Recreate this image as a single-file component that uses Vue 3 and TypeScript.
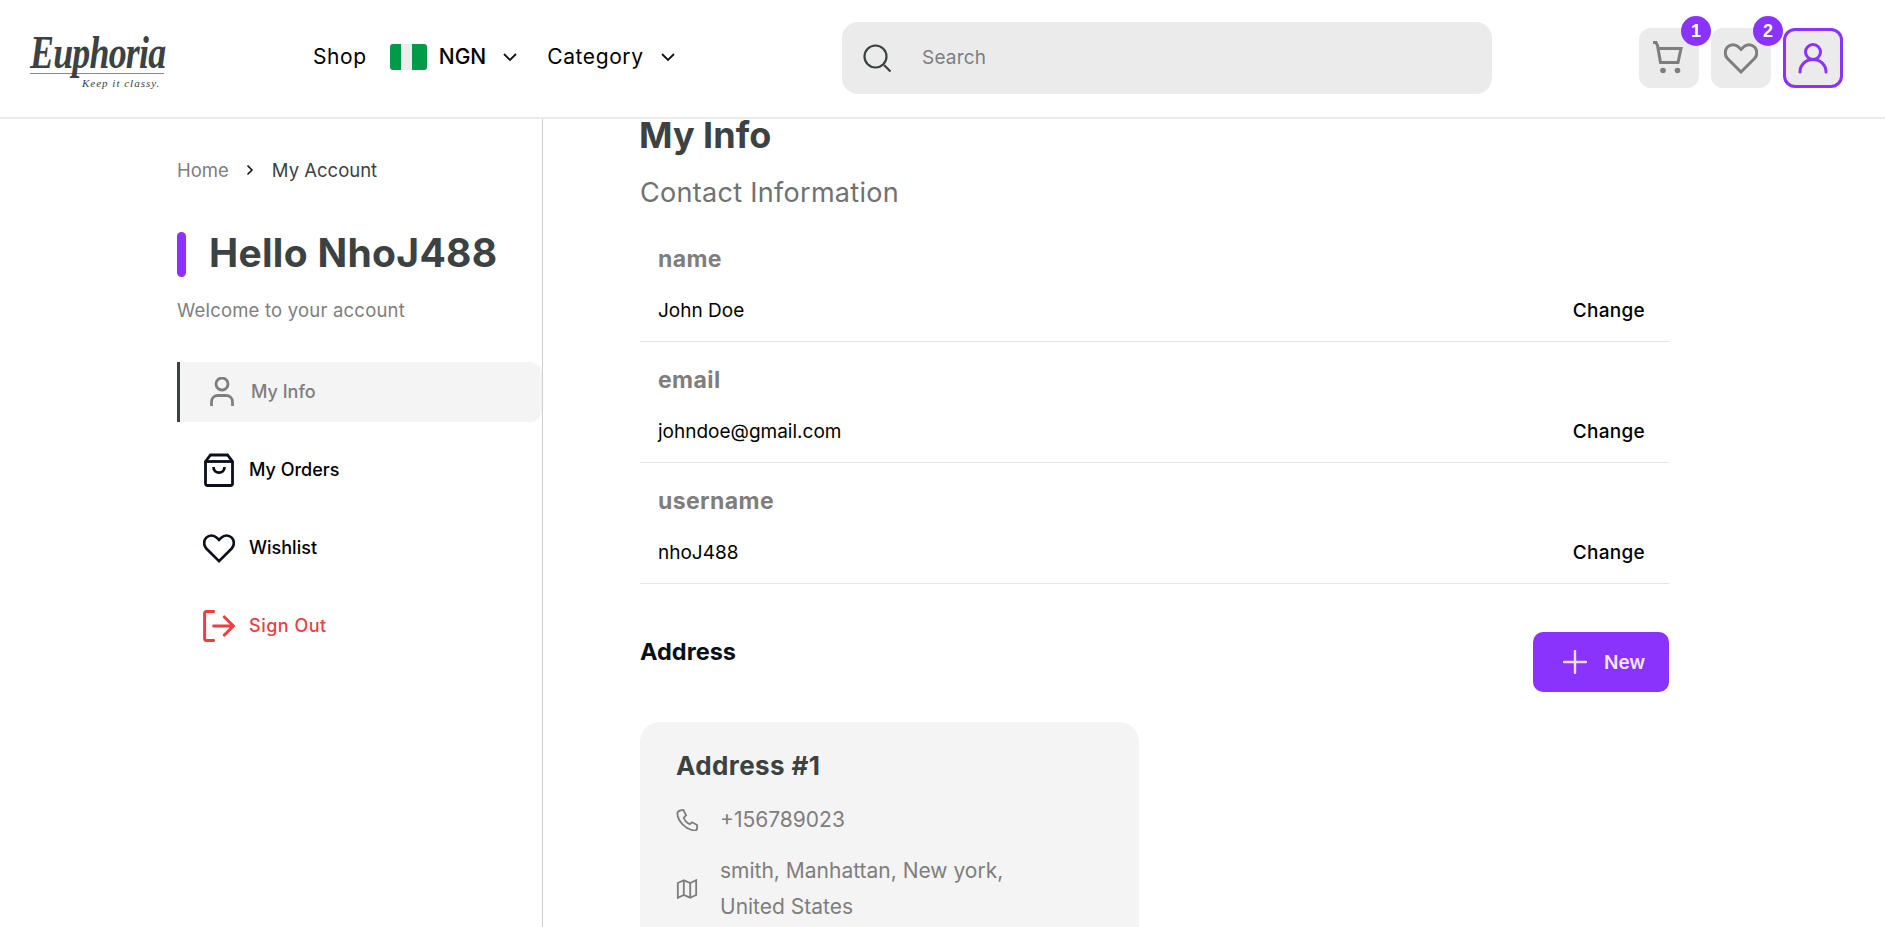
<template>
  <div class="page">
    <header class="topbar">
      <div class="logo">
        <span class="logo-name">Euphoria</span>
        <div class="logo-rule"></div>
        <span class="logo-tag">Keep it classy.</span>
      </div>
      <nav class="nav">
        <a class="nav-link">Shop</a>
        <div class="currency">
          <svg class="flag" viewBox="0 0 37 26">
            <rect width="37" height="26" rx="3" fill="#009a49" />
            <rect x="11" width="11" height="26" fill="#ededed" />
          </svg>
          <span>NGN</span>
          <svg class="chev" viewBox="0 0 16 10"><path d="M2 2l6 6 6-6" /></svg>
        </div>
        <div class="category">
          <a class="nav-link">Category</a>
          <svg class="chev" viewBox="0 0 16 10"><path d="M2 2l6 6 6-6" /></svg>
        </div>
      </nav>
      <div class="search">
        <svg class="search-icon" viewBox="0 0 30 30">
          <circle cx="13.5" cy="13.5" r="11" />
          <path d="M22 22l6.5 6.5" />
        </svg>
        <span>Search</span>
      </div>
      <div class="actions">
        <button class="action">
          <svg class="action-icon" viewBox="0 0 34 34">
            <path d="M1 1.500h3l1.500 3 3 17h17.500l3-14h-23" />
            <circle cx="11" cy="29.500" r="2.800" class="solid" />
            <circle cx="25.500" cy="29.500" r="2.800" class="solid" />
          </svg>
          <span class="badge">1</span>
        </button>
        <button class="action">
          <svg class="action-icon" viewBox="0 0 34 34"><path :d="heartPath" /></svg>
          <span class="badge">2</span>
        </button>
        <button class="action active">
          <svg class="action-icon" viewBox="0 0 34 34">
            <circle cx="17" cy="11" r="7.500" />
            <path d="M4 31c0-7 5.500-12.500 13-12.500s13 5.500 13 12.500" />
          </svg>
        </button>
      </div>
    </header>

    <div class="body">
      <aside class="sidebar">
        <div class="crumbs">
          <span class="crumb-home">Home</span>
          <svg class="crumb-sep" viewBox="0 0 8 12"><path d="M1.500 1.500l4.500 4.500-4.500 4.500" /></svg>
          <span>My Account</span>
        </div>
        <div class="hello">
          <span class="hello-bar"></span>
          <h1>Hello NhoJ488</h1>
        </div>
        <p class="welcome">Welcome to your account</p>
        <ul class="menu">
          <li class="menu-item current">
            <svg class="menu-icon user" viewBox="0 0 24 30">
              <circle cx="12" cy="7" r="6" />
              <path d="M1.500 29v-4c0-4 3-6.500 6.500-6.500h8c3.500 0 6.500 2.500 6.500 6.500v4" />
            </svg>
            <span>My Info</span>
          </li>
          <li class="menu-item">
            <svg class="menu-icon" viewBox="0 0 30 34">
              <path d="M1.500 8.500l5-6.500h17l5 6.500v22a2 2 0 0 1-2 2h-23a2 2 0 0 1-2-2z" />
              <path d="M1.500 8.500h27" />
              <path d="M9.500 14c0 7.500 11 7.500 11 0" />
            </svg>
            <span>My Orders</span>
          </li>
          <li class="menu-item">
            <svg class="menu-icon" viewBox="0 0 34 34"><path :d="heartPath" /></svg>
            <span>Wishlist</span>
          </li>
          <li class="menu-item signout">
            <svg class="menu-icon" viewBox="0 0 30 30">
              <path d="M10 1.500h-7a1.500 1.500 0 0 0-1.500 1.500v24a1.500 1.500 0 0 0 1.500 1.500h7" />
              <path d="M10 15h18M20 6.500l8.500 8.500-8.500 8.500" />
            </svg>
            <span>Sign Out</span>
          </li>
        </ul>
      </aside>

      <main class="content">
        <h2 class="title">My Info</h2>
        <h3 class="subtitle">Contact Information</h3>
        <section v-for="row in rows" :key="row.label" class="field">
          <div class="field-label">{{ row.label }}</div>
          <div class="field-line">
            <span class="field-value">{{ row.value }}</span>
            <a class="change">Change</a>
          </div>
        </section>

        <div class="address-head">
          <h4>Address</h4>
          <button class="new-btn">
            <svg viewBox="0 0 24 24"><path d="M12 1v22M1 12h22" /></svg>
            <span>New</span>
          </button>
        </div>

        <article class="card">
          <h5>Address #1</h5>
          <div class="card-line">
            <svg class="card-icon" viewBox="0 0 24 24">
              <path d="M5 1.500l3-.5 3 6-2.500 2.500c1 3 3 5.500 6.500 7l2.500-2 5.500 3v3.500c0 1.500-1 2.500-3 2.500C10 22 2 13 1.500 5c0-1.500 1.500-3 3.500-3.500z" />
            </svg>
            <span>+156789023</span>
          </div>
          <div class="card-line address-line">
            <svg class="card-icon" viewBox="0 0 24 24">
              <path d="M2 5.500l6.500-3 7 3 6.500-3v16l-6.500 3-7-3-6.500 3z" />
              <path d="M8.500 2.500v16M15.500 5.500v16" />
            </svg>
            <span>smith, Manhattan, New york,<br />United States</span>
          </div>
        </article>
      </main>
    </div>
  </div>
</template>

<script setup lang="ts">
interface InfoRow {
  label: string;
  value: string;
}

const heartPath =
  'M17 31L3.500 17.500C.5 14.500.5 9 3.500 6c3-3 8-3 11 0L17 8.500 19.500 6c3-3 8-3 11 0s3 8.500 0 11.500z';

const rows: InfoRow[] = [
  { label: 'name', value: 'John Doe' },
  { label: 'email', value: 'johndoe@gmail.com' },
  { label: 'username', value: 'nhoJ488' },
];
</script>

<style>
html,
body {
  margin: 0;
  overflow: hidden;
  background: #fff;
}
</style>

<style scoped>
.page {
  height: 927px;
  overflow: hidden;
  font-family: Inter, "Noto Sans", sans-serif;
  color: #3c4242;
}

.topbar {
  height: 117px;
  box-sizing: content-box;
  border-bottom: 2px solid #ebebeb;
  display: flex;
  align-items: center;
}

.logo {
  width: 135px;
  margin-left: 30px;
  margin-top: 3px;
  display: flex;
  flex-direction: column;
  color: #3c4242;
  font-family: "Liberation Serif", serif;
  font-style: italic;
}

.logo-name {
  font-size: 46px;
  line-height: 41px;
  font-weight: 700;
  letter-spacing: -1px;
  white-space: nowrap;
  transform: scaleX(0.78);
  transform-origin: left top;
}

.logo-rule {
  height: 1px;
  margin-right: 1px;
  background: #888;
}

.logo-tag {
  font-size: 11px;
  line-height: 12px;
  margin: 3px 0 0 52px;
  white-space: nowrap;
  letter-spacing: 1px;
}

.nav {
  margin-left: 148px;
  width: 529px;
  margin-top: -4px;
  display: flex;
  align-items: center;
  font-size: 21px;
  letter-spacing: 0.6px;
  color: #000;
}

.nav-link {
  color: #000;
}

.currency {
  margin-left: 23px;
  display: flex;
  align-items: center;
  font-weight: 500;
  letter-spacing: 0;
}

.flag {
  width: 37px;
  height: 26px;
  margin-right: 12px;
}

.chev {
  width: 16px;
  height: 10px;
  margin-left: 16px;
  fill: none;
  stroke: #111;
  stroke-width: 1.800;
}

.category {
  margin-left: 29px;
  display: flex;
  align-items: center;
}

.category .chev {
  margin-left: 16px;
}

.search {
  width: 650px;
  height: 72px;
  margin-top: -2px;
  border-radius: 16px;
  background: #ebebeb;
  display: flex;
  align-items: center;
  padding-left: 20px;
  box-sizing: border-box;
  font-size: 19px;
  letter-spacing: 0.2px;
  color: #807d7e;
}

.search-icon {
  width: 30px;
  height: 30px;
  margin-right: 30px;
  fill: none;
  stroke: #3c4242;
  stroke-width: 2.200;
}

.actions {
  margin-left: 147px;
  display: flex;
  gap: 12px;
  margin-top: -1px;
}

.action {
  position: relative;
  width: 60px;
  height: 60px;
  padding: 0;
  border: 0;
  border-radius: 12px;
  background: #ebebeb;
  display: flex;
  align-items: center;
  justify-content: center;
}

.action.active {
  border: 3px solid #8a33fd;
}

.action-icon {
  width: 34px;
  height: 34px;
  fill: none;
  stroke: #807d7e;
  stroke-width: 3;
}

.action.active .action-icon {
  stroke: #8a33fd;
  stroke-linecap: round;
}

.action-icon .solid {
  fill: #807d7e;
  stroke: none;
}

.badge {
  position: absolute;
  top: -12px;
  right: -12px;
  width: 30px;
  height: 30px;
  border-radius: 50%;
  background: #8a33fd;
  color: #fff;
  font-size: 18px;
  font-weight: 900;
  display: flex;
  align-items: center;
  justify-content: center;
}

.body {
  display: flex;
  height: 808px;
}

.sidebar {
  width: 543px;
  box-sizing: border-box;
  padding: 39px 0 0 177px;
  border-right: 1px solid #cfcfcf;
  flex-shrink: 0;
}

.crumbs {
  display: flex;
  align-items: center;
  font-size: 18.500px;
  line-height: 24px;
}

.crumb-home {
  color: #807d7e;
}

.crumb-sep {
  width: 8px;
  height: 12px;
  margin: 0 18px 0 17px;
  fill: none;
  stroke: #111;
  stroke-width: 1.600;
}

.hello {
  margin-top: 50px;
  display: flex;
  align-items: center;
  gap: 23px;
}

.hello-bar {
  width: 9px;
  height: 45px;
  border-radius: 5px;
  background: #8a33fd;
}

.hello h1 {
  margin: 0;
  margin-top: -4px;
  font-size: 39px;
  line-height: 45px;
  font-weight: 700;
  letter-spacing: 0.3px;
  color: #3c4242;
  white-space: nowrap;
}

.welcome {
  margin: 21px 0 0;
  font-size: 18.500px;
  line-height: 24px;
  letter-spacing: 0.2px;
  color: #807d7e;
}

.menu {
  list-style: none;
  margin: 40px 0 0;
  padding: 0;
}

.menu-item {
  height: 60px;
  margin-bottom: 18px;
  padding-left: 27px;
  display: flex;
  align-items: center;
  gap: 15px;
  font-size: 18px;
  font-weight: 500;
  color: #000;
}

.menu-item > span {
  margin-top: -2px;
}

.menu-item.current {
  height: 60px;
  margin-bottom: 18px;
  padding-left: 30px;
  border-left: 3px solid #3c4242;
  border-radius: 0 12px 12px 0;
  background: #f4f4f4;
  color: #807d7e;
  gap: 17px;
}

.menu-icon {
  width: 32px;
  height: 34px;
  margin-left: -1px;
  margin-right: -1px;
  fill: none;
  stroke: #0b0f1a;
  stroke-width: 2.800;
}

.menu-icon.user {
  width: 24px;
  height: 30px;
  margin: 0;
  stroke: #807d7e;
}

.signout {
  color: #ed3f3f;
  letter-spacing: 0.5px;
}

.signout .menu-icon {
  stroke: #ed3f3f;
  stroke-linecap: round;
}

.content {
  flex: 1;
  padding: 0 216px 0 97px;
  min-width: 0;
}

.title {
  margin: 0 0 0 -1px;
  padding-top: 0;
  font-size: 36px;
  line-height: 32px;
  font-weight: 700;
  color: #3c4242;
}

.subtitle {
  margin: 25px 0 0;
  font-size: 27px;
  line-height: 34px;
  font-weight: 400;
  letter-spacing: 0.3px;
  color: #6f7272;
}

.field {
  height: 121px;
  box-sizing: border-box;
  padding: 0 24px 0 18px;
  border-bottom: 1px solid #e5e5e5;
}

.subtitle + .field {
  margin-top: 11px;
}

.field-label {
  padding-top: 24px;
  font-size: 23px;
  line-height: 28px;
  font-weight: 700;
  letter-spacing: 0.4px;
  color: #807d7e;
}

.field-line {
  margin-top: 26px;
  display: flex;
  justify-content: space-between;
  font-size: 19px;
  line-height: 24px;
  color: #000;
}

.change {
  font-weight: 500;
  letter-spacing: 0.3px;
}

.address-head {
  margin-top: 48px;
  display: flex;
  justify-content: space-between;
  align-items: flex-start;
}

.address-head h4 {
  margin: 5px 0 0;
  font-size: 23.500px;
  line-height: 30px;
  font-weight: 700;
  color: #0b0f1a;
}

.new-btn {
  width: 136px;
  height: 60px;
  border: 0;
  border-radius: 10px;
  background: #8a33fd;
  color: #f1e6ff;
  font-family: inherit;
  font-size: 19px;
  font-weight: 600;
  display: flex;
  align-items: center;
  padding: 0 0 0 30px;
  gap: 17px;
}

.new-btn svg {
  width: 24px;
  height: 24px;
  fill: none;
  stroke: #ece0fb;
  stroke-width: 2.400;
  stroke-linecap: round;
}

.card {
  margin-top: 30px;
  width: 499px;
  height: 300px;
  box-sizing: border-box;
  padding: 28px 36px;
  border-radius: 20px;
  background: #f4f4f4;
}

.card h5 {
  margin: 0;
  font-size: 26px;
  line-height: 32px;
  font-weight: 700;
  letter-spacing: 0.4px;
  color: #3c4242;
}

.card-line {
  margin-top: 20px;
  display: flex;
  align-items: center;
  gap: 22px;
  font-size: 21px;
  line-height: 36px;
  color: #807d7e;
}

.address-line {
  margin-top: 15px;
}

.card-icon {
  width: 22px;
  height: 22px;
  flex-shrink: 0;
  fill: none;
  stroke: #807d7e;
  stroke-width: 2;
}
</style>
